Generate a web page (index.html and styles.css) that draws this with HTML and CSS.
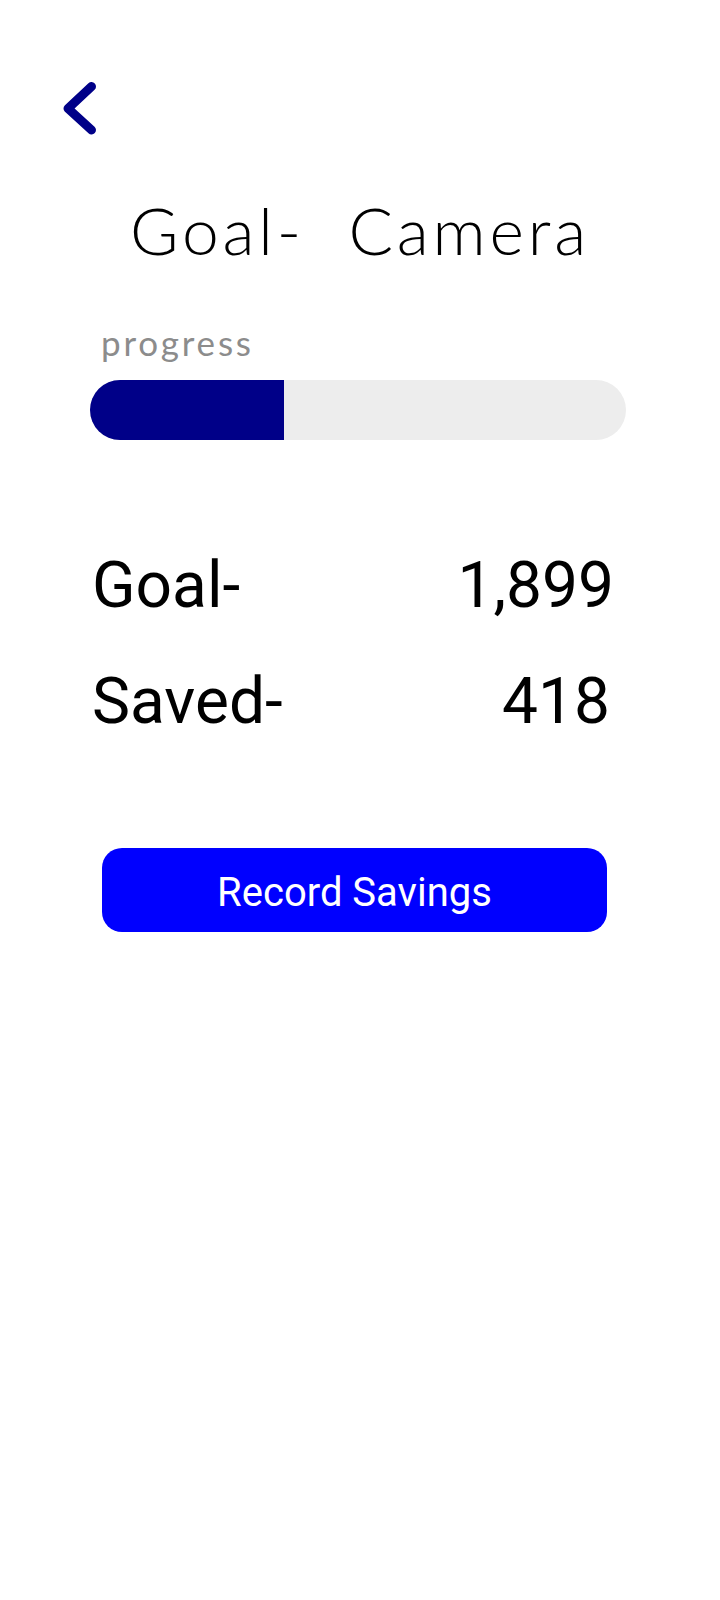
FILE: index.html
```html
<!DOCTYPE html>
<html lang="en">
<head>
<meta charset="utf-8">
<title>Goal - Camera</title>
<link rel="stylesheet" href="styles.css">
</head>
<body>
<div class="screen">
  <header class="topbar">
    <svg class="back" width="44" height="60" viewBox="0 0 44 60" aria-label="Back">
      <polyline points="33.5,8.5 10,30.5 33.5,52" fill="none" stroke="#000088" stroke-width="9" stroke-linecap="round" stroke-linejoin="round"/>
    </svg>
  </header>
  <h1 class="title">Goal-&nbsp; Camera</h1>
  <section class="progress">
    <div class="progress-label">progress</div>
    <div class="bar"><div class="bar-fill" style="width: 36.2%"></div></div>
  </section>
  <section class="stats">
    <div class="row"><span class="label">Goal-</span><span class="value">1,899</span></div>
    <div class="row"><span class="label">Saved-</span><span class="value value-saved">418</span></div>
  </section>
  <div class="actions">
    <button class="record-btn">Record Savings</button>
  </div>
</div>
</body>
</html>
```

FILE: styles.css
```css
html, body {
  margin: 0;
  padding: 0;
  background: #ffffff;
}

.screen {
  width: 720px;
  min-height: 1600px;
  display: flex;
  flex-direction: column;
}

.topbar {
  padding: 78px 0 0 58px;
  height: 60px;
}

.back {
  display: block;
}

.title {
  margin: 52px 0 0 0;
  font-family: Lato, "Liberation Sans", sans-serif;
  font-weight: 300;
  font-size: 66px;
  line-height: 1.2;
  letter-spacing: 3.8px;
  text-align: center;
  color: #000000;
}

.progress {
  margin-top: 52px;
  padding-left: 90px;
}

.progress-label {
  padding-left: 11px;
  font-family: Lato, "Liberation Sans", sans-serif;
  font-size: 35px;
  line-height: 1.2;
  letter-spacing: 2.8px;
  color: #8c8c8c;
}

.bar {
  margin-top: 17px;
  width: 536px;
  height: 60px;
  border-radius: 30px;
  background: #ededed;
  overflow: hidden;
}

.bar-fill {
  height: 100%;
  background: #000088;
}

.stats {
  margin-top: 88px;
  padding-left: 92px;
  width: 522px;
}

.row {
  display: flex;
  justify-content: space-between;
  font-family: Roboto, "Liberation Sans", sans-serif;
  font-size: 64px;
  line-height: 116px;
  color: #000000;
}

.value-saved {
  padding-right: 4px;
}

.actions {
  margin-top: 88px;
  padding-left: 102px;
}

.record-btn {
  display: block;
  width: 505px;
  height: 84px;
  border: none;
  border-radius: 20px;
  background: #0000ff;
  color: #ffffff;
  font-family: Roboto, "Liberation Sans", sans-serif;
  font-size: 40px;
  padding: 5px 0 0 0;
}
```
